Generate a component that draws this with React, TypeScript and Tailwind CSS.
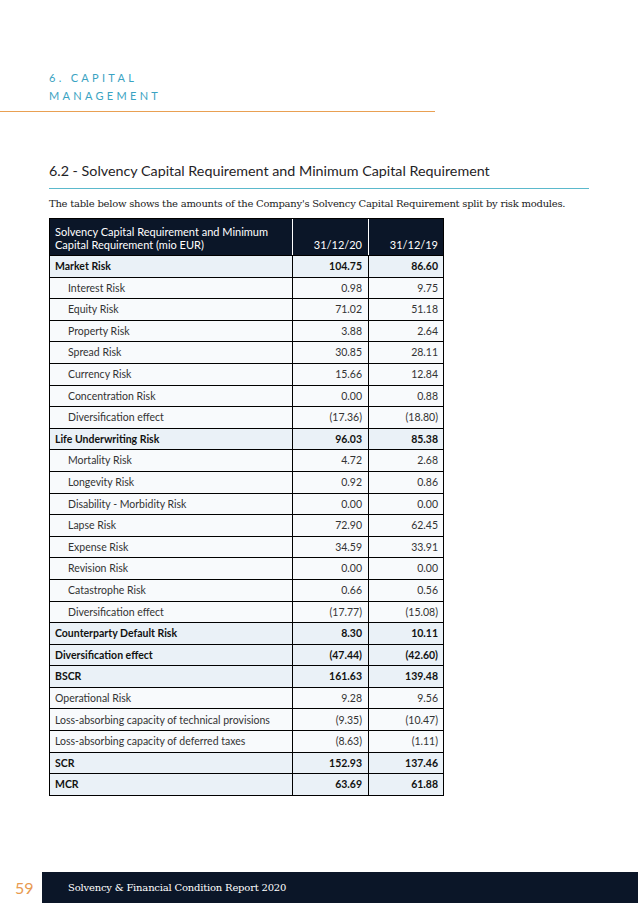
type Row = { label: string; a: string; b: string; bold?: boolean; sub?: boolean }

const rows: Row[] = [
  { label: "Market Risk", a: "104.75", b: "86.60", bold: true },
  { label: "Interest Risk", a: "0.98", b: "9.75", sub: true },
  { label: "Equity Risk", a: "71.02", b: "51.18", sub: true },
  { label: "Property Risk", a: "3.88", b: "2.64", sub: true },
  { label: "Spread Risk", a: "30.85", b: "28.11", sub: true },
  { label: "Currency Risk", a: "15.66", b: "12.84", sub: true },
  { label: "Concentration Risk", a: "0.00", b: "0.88", sub: true },
  { label: "Diversification effect", a: "(17.36)", b: "(18.80)", sub: true },
  { label: "Life Underwriting Risk", a: "96.03", b: "85.38", bold: true },
  { label: "Mortality Risk", a: "4.72", b: "2.68", sub: true },
  { label: "Longevity Risk", a: "0.92", b: "0.86", sub: true },
  { label: "Disability - Morbidity Risk", a: "0.00", b: "0.00", sub: true },
  { label: "Lapse Risk", a: "72.90", b: "62.45", sub: true },
  { label: "Expense Risk", a: "34.59", b: "33.91", sub: true },
  { label: "Revision Risk", a: "0.00", b: "0.00", sub: true },
  { label: "Catastrophe Risk", a: "0.66", b: "0.56", sub: true },
  { label: "Diversification effect", a: "(17.77)", b: "(15.08)", sub: true },
  { label: "Counterparty Default Risk", a: "8.30", b: "10.11", bold: true },
  { label: "Diversification effect", a: "(47.44)", b: "(42.60)", bold: true },
  { label: "BSCR", a: "161.63", b: "139.48", bold: true },
  { label: "Operational Risk", a: "9.28", b: "9.56" },
  { label: "Loss-absorbing capacity of technical provisions", a: "(9.35)", b: "(10.47)" },
  { label: "Loss-absorbing capacity of deferred taxes", a: "(8.63)", b: "(1.11)" },
  { label: "SCR", a: "152.93", b: "137.46", bold: true },
  { label: "MCR", a: "63.69", b: "61.88", bold: true },
]

const sans = "font-['Lato','Open_Sans',sans-serif]"
const serif = "font-['DejaVu_Serif','Liberation_Serif',serif]"

function TableRow({ row }: { row: Row }) {
  const bg = row.bold ? "bg-[#eaf1f7]" : "bg-[#f8fafc]"
  const weight = row.bold ? "font-bold text-[#111]" : "font-normal text-[#333]"
  return (
    <div className={`grid h-[21.6px] grid-cols-[242px_76px_76px] border-t border-black ${bg} ${weight}`}>
      <div className={`flex items-center whitespace-nowrap ${row.sub ? "pl-[18px]" : "pl-[5px]"}`}>
        {row.label}
      </div>
      <div className="flex items-center justify-end border-l border-black pr-[6px]">
        {row.a}
      </div>
      <div className="flex items-center justify-end border-l border-black pr-[6px]">
        {row.b}
      </div>
    </div>
  )
}

export default function App() {
  return (
    <div className="relative flex h-[903px] w-[638px] flex-col overflow-hidden bg-white">
      <div className="pl-[49px] pt-[69px]">
        <p className={`${sans} text-[11px] leading-[18px] tracking-[0.3em] text-[#3aa3c2]`}>
          6. CAPITAL
          <br />
          MANAGEMENT
        </p>
      </div>
      <div className="mt-[6px] h-px w-[435px] bg-[#e9a052]" />

      <div className="pl-[49px] pr-[49px] pt-[49px]">
        <h2 className={`${sans} text-[14.3px] leading-[20px] text-[#1f2326]`}>
          6.2 - Solvency Capital Requirement and Minimum Capital Requirement
        </h2>
        <div className="mt-[7px] h-px w-[540px] bg-[#5bb9cc]" />
        <p className={`${serif} mt-[8px] text-[10px] leading-[14px] tracking-[-0.025em] text-[#222]`}>
          The table below shows the amounts of the Company's Solvency Capital Requirement split by risk modules.
        </p>

        <div className={`${sans} mt-[7px] w-[395px] border border-black text-[10.5px] leading-none`}>
          <div className="grid h-[36px] grid-cols-[242px_76px_76px] bg-[#0b1628] text-[11px] text-white">
            <div className="flex flex-col justify-end pb-[4px] pl-[5px] leading-[13px]">
              <span>Solvency Capital Requirement and Minimum</span>
              <span>Capital Requirement (mio EUR)</span>
            </div>
            <div className="flex items-end justify-end border-l border-white pb-[5px] pr-[6px]">
              31/12/20
            </div>
            <div className="flex items-end justify-end border-l border-white pb-[5px] pr-[6px]">
              31/12/19
            </div>
          </div>
          {rows.map((row, i) => (
            <TableRow key={i} row={row} />
          ))}
        </div>
      </div>

      <div className="mt-auto flex h-[31px] items-center">
        <div className={`${sans} w-[42px] pl-[15px] text-[16px] text-[#e89a50]`}>59</div>
        <div className="flex h-full flex-1 items-center bg-[#0b1628] pl-[26px]">
          <span className={`${serif} text-[10px] tracking-[-0.02em] text-white`}>
            Solvency &amp; Financial Condition Report 2020
          </span>
        </div>
      </div>
    </div>
  )
}
